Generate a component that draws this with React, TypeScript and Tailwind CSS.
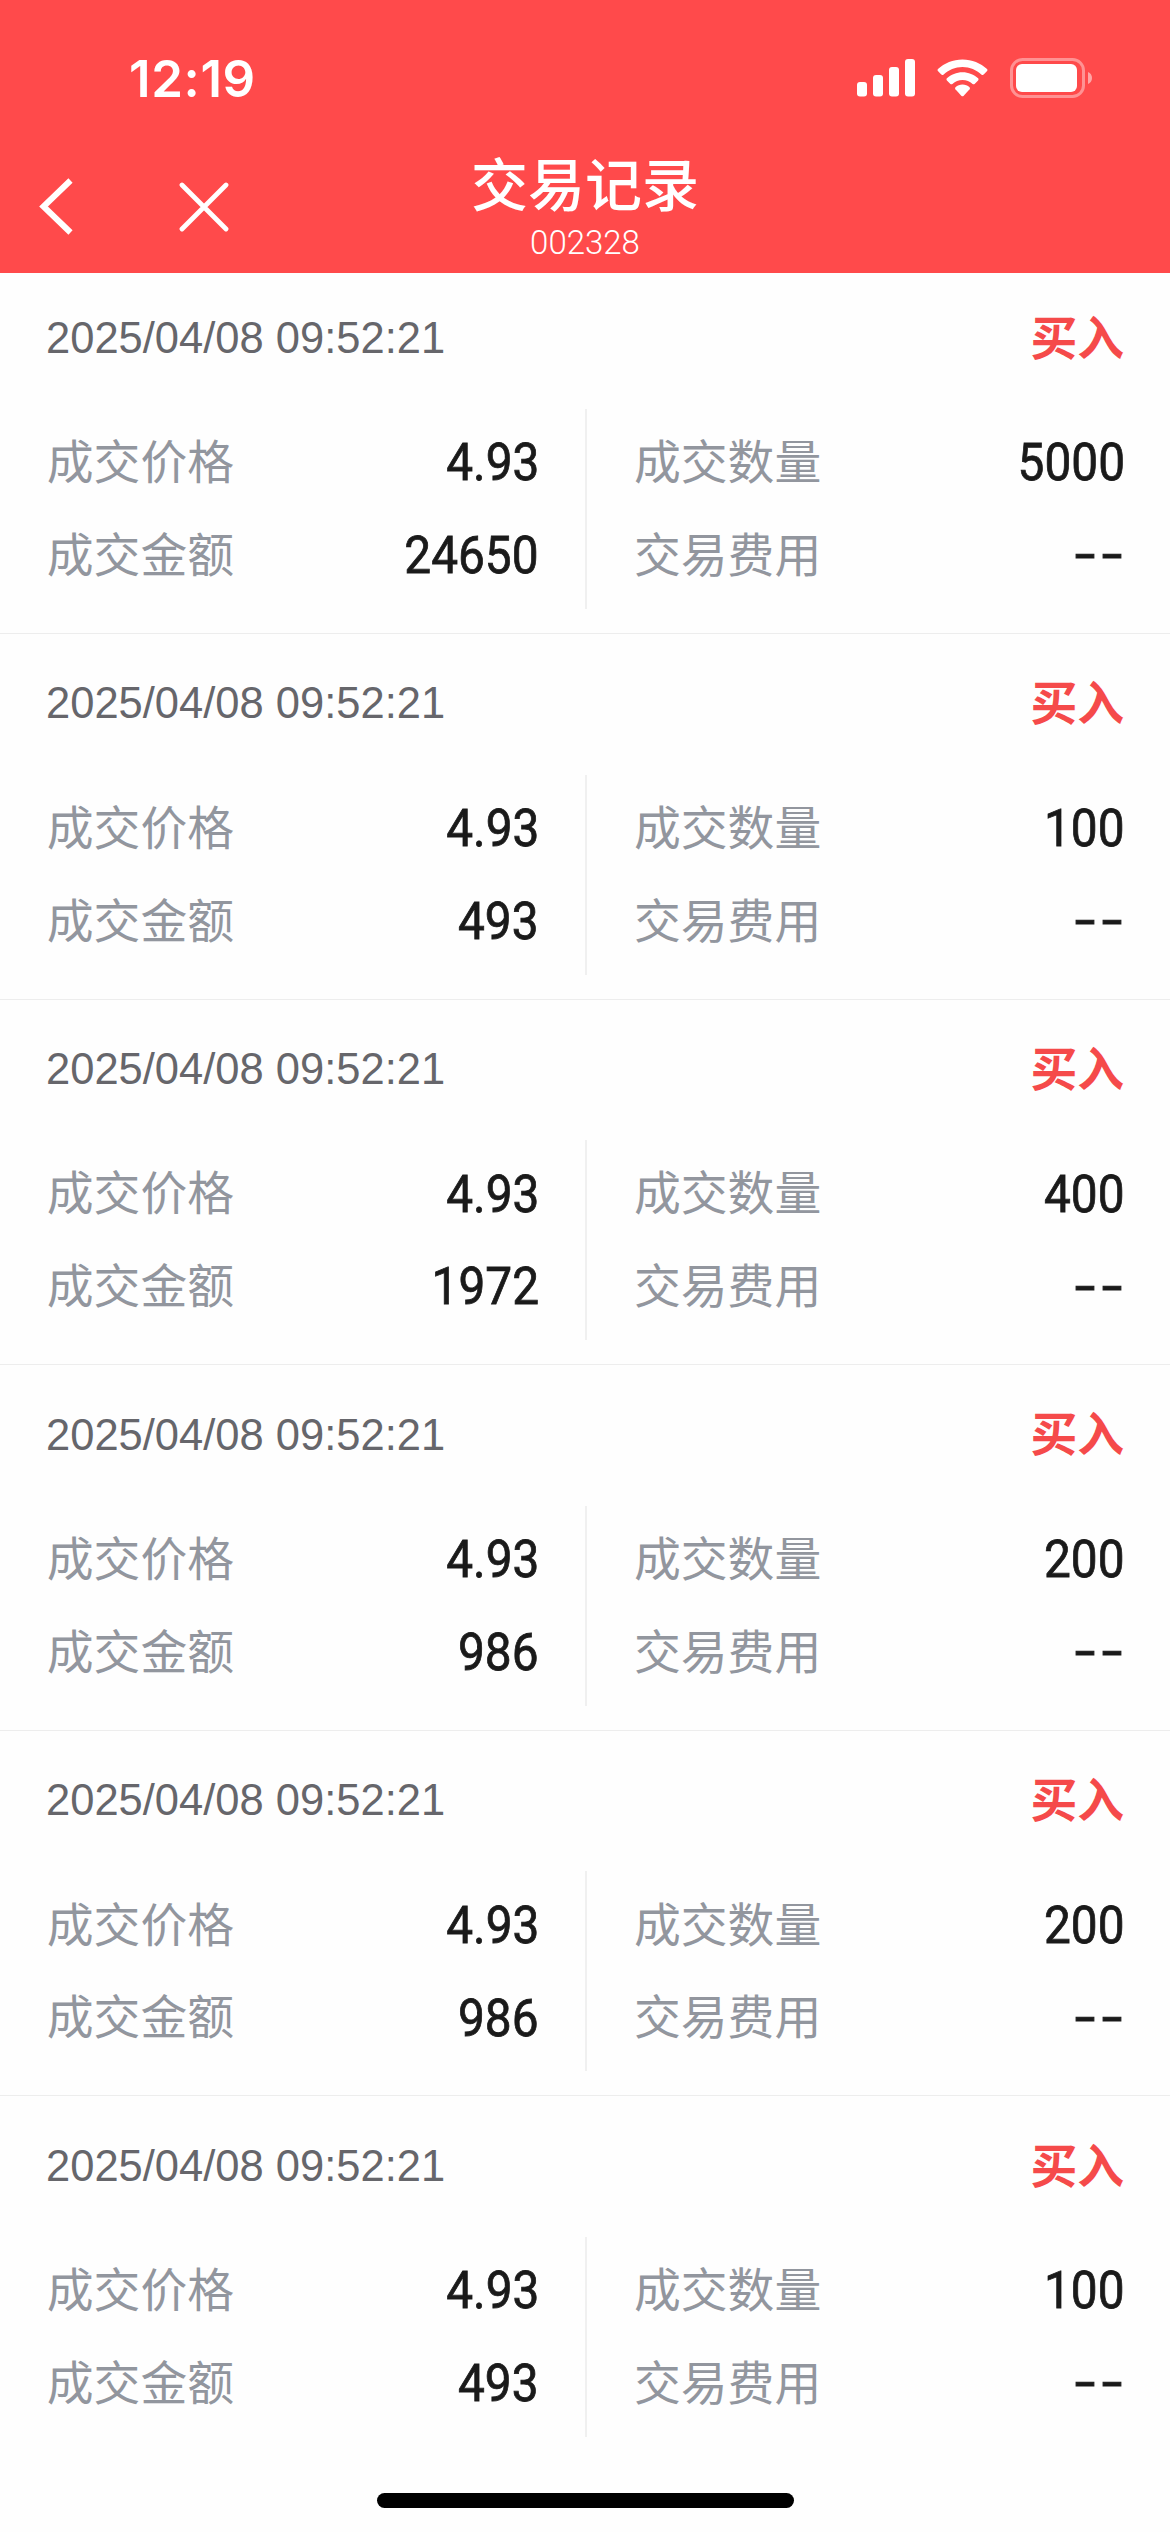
import clsx from "clsx";

type Trade = {
  time: string;
  price: string;
  count: string;
  amount: string;
  fee: string;
};

const trades: Trade[] = [
  { time: "2025/04/08 09:52:21", price: "4.93", count: "5000", amount: "24650", fee: "--" },
  { time: "2025/04/08 09:52:21", price: "4.93", count: "100", amount: "493", fee: "--" },
  { time: "2025/04/08 09:52:21", price: "4.93", count: "400", amount: "1972", fee: "--" },
  { time: "2025/04/08 09:52:21", price: "4.93", count: "200", amount: "986", fee: "--" },
  { time: "2025/04/08 09:52:21", price: "4.93", count: "200", amount: "986", fee: "--" },
  { time: "2025/04/08 09:52:21", price: "4.93", count: "100", amount: "493", fee: "--" },
];

function StatusBar() {
  return (
    <div className="flex h-[156px] items-center justify-between pl-[129px] pr-[78px]">
      <span className="font-['Inter',sans-serif] text-[51px] leading-none font-semibold tracking-[0.6px]">12:19</span>
      <div className="flex items-center">
        <svg className="h-[38px] w-[58px]" viewBox="0 0 58 38" fill="currentColor">
          <rect x="0" y="23" width="10" height="14.5" rx="3" />
          <rect x="16" y="16" width="10" height="21.5" rx="3" />
          <rect x="32" y="8" width="10" height="29.5" rx="3" />
          <rect x="48" y="0" width="10" height="37.5" rx="3" />
        </svg>
        <svg className="ml-[22px] h-[38px] w-[51px]" viewBox="0 0 51 38" fill="currentColor">
          <path d="M25.5 0.5C35 0.5 43.6 4.1 50 10.1c.6.6.6 1.4.1 2l-3.4 3.5c-.6.6-1.5.6-2.1.1C39.5 11 32.8 8.1 25.5 8.1S11.5 11 6.4 15.7c-.6.5-1.5.5-2.1-.1L.9 12.1c-.5-.6-.5-1.4.1-2C7.4 4.1 16 .5 25.5.5Z" />
          <path d="M25.5 13.2c6 0 11.5 2.3 15.6 6.1.6.6.6 1.5 0 2.1l-3.5 3.5c-.6.6-1.4.6-2 .1a15 15 0 0 0-20.2 0c-.6.5-1.4.5-2-.1l-3.5-3.5c-.6-.6-.6-1.5 0-2.1 4.1-3.8 9.6-6.1 15.6-6.1Z" />
          <path d="M25.5 25.6c2.7 0 5.1 1 7 2.6.6.6.6 1.4.1 2l-6.1 6.7c-.6.6-1.4.6-2 0l-6.1-6.7c-.5-.6-.5-1.4.1-2 1.9-1.6 4.3-2.6 7-2.6Z" />
        </svg>
        <svg className="ml-[22px] h-[40px] w-[82px]" viewBox="0 0 82 40" fill="currentColor">
          <rect x="1.5" y="1.5" width="72" height="37" rx="11" fill="none" stroke="currentColor" strokeWidth="3" opacity="0.4" />
          <rect x="6" y="6" width="61" height="28" rx="6" />
          <path d="M78 14c2.5 1 4 3.2 4 6s-1.5 5-4 6Z" opacity="0.5" />
        </svg>
      </div>
    </div>
  );
}

function NavBar() {
  return (
    <div className="relative flex h-[117px] items-start">
      <svg className="ml-[39px] mt-[22px] h-[57px] w-[34px]" viewBox="0 0 34 57" fill="none" stroke="currentColor" strokeWidth="6">
        <path d="M31.5 2.5 4.5 28.5l27 26" />
      </svg>
      <svg className="ml-[106px] mt-[26px] h-[50px] w-[50px]" viewBox="0 0 50 50" fill="none" stroke="currentColor" strokeWidth="4.8" strokeLinecap="round">
        <path d="m3 3 44 44M47 3 3 47" />
      </svg>
      <div className="absolute inset-x-0 top-0 flex flex-col items-center">
        <h1 className="-mt-[5px] text-[57px] leading-[60px] font-medium">交易记录</h1>
        <span className="mt-[14px] font-['Roboto',sans-serif] text-[33px] leading-[36px] font-light">002328</span>
      </div>
    </div>
  );
}

function Field({ label, value }: { label: string; value: string }) {
  const empty = value === "--";

  return (
    <div className="flex h-[92.8px] items-center justify-between leading-none">
      <span className="pb-[6px] text-[46.8px] text-[#92969e]">{label}</span>
      <span
        className={clsx(
          "text-[#1a1a1a]",
          empty
            ? "mr-[6px] origin-right scale-x-[1.3] pt-[2px] font-['Liberation_Mono',monospace] text-[50px] tracking-[-9.3px] [-webkit-text-stroke:0.8px_#1a1a1a]"
            : "origin-right scale-x-[0.91] font-['Roboto',sans-serif] text-[52.5px] [-webkit-text-stroke:0.8px_#1a1a1a]"
        )}
      >
        {value}
      </span>
    </div>
  );
}

function TradeItem({ trade }: { trade: Trade }) {
  return (
    <li className="flex h-[365.6px] flex-col justify-end border-b border-[#ededed] pb-[24px] first:h-[361px] last:border-transparent">
      <div className="flex h-[141px] shrink-0 items-center justify-between px-[46px] leading-none">
        <span className="font-['Liberation_Sans',sans-serif] text-[43.5px] text-[#66666b]">{trade.time}</span>
        <span className="pb-[7px] text-[46.8px] font-bold text-[#f54a4a]">买入</span>
      </div>
      <div className="grid h-[200px] shrink-0 grid-cols-2">
        <div className="flex flex-col justify-center pl-[46.8px] pr-[46px]">
          <Field label="成交价格" value={trade.price} />
          <Field label="成交金额" value={trade.amount} />
        </div>
        <div className="flex flex-col justify-center border-l-2 border-[#f0f0f0] pl-[47px] pr-[45px]">
          <Field label="成交数量" value={trade.count} />
          <Field label="交易费用" value={trade.fee} />
        </div>
      </div>
    </li>
  );
}

export default function App() {
  return (
    <div className="flex h-[2532px] w-[1170px] flex-col overflow-hidden bg-[#fefefe] font-['Noto_Sans_CJK_SC',sans-serif]">
      <header className="h-[273px] shrink-0 bg-[#ff4a4b] text-white">
        <StatusBar />
        <NavBar />
      </header>
      <ul>
        {trades.map((trade, i) => (
          <TradeItem key={i} trade={trade} />
        ))}
      </ul>
      {/* home indicator */}
      <div className="mx-auto mt-auto mb-[24px] h-[15px] w-[417px] shrink-0 rounded-full bg-black" />
    </div>
  );
}
